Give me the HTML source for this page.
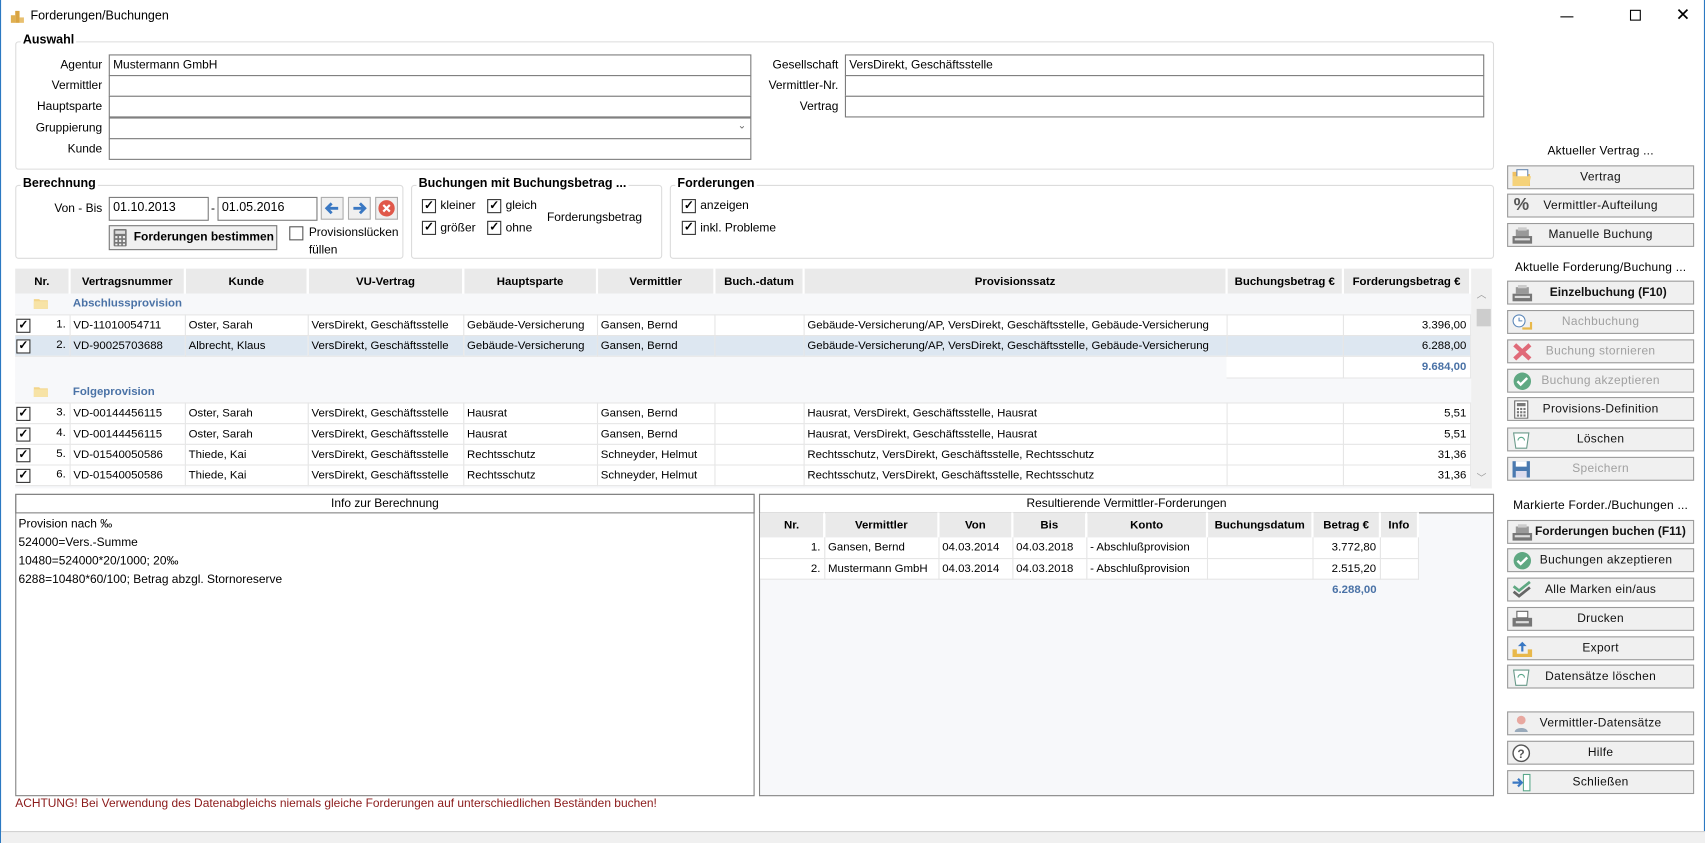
<!DOCTYPE html>
<html><head><meta charset="utf-8">
<style>
*{box-sizing:border-box;margin:0;padding:0}
html,body{width:1705px;height:843px;overflow:hidden;background:#fff}
#w{position:absolute;left:0;top:0;width:1568px;height:775px;transform:scale(1.08737,1.08774);transform-origin:0 0;font-family:"Liberation Sans",sans-serif;font-size:11px;color:#000;background:#fff;border-left:1px solid #2b79c2;border-right:1px solid #2b79c2}
.a{position:absolute;white-space:nowrap}
.grp{position:absolute;border:1px solid #dcdcdc;border-radius:3px}
.gl{position:absolute;background:#fff;font-weight:bold;font-size:11.5px;padding:0 2px}
.lbl{position:absolute;text-align:right;width:90px}
.inp{position:absolute;border:1px solid #7a7a7a;background:#fff;height:20px;padding:3px 3px;font-size:11px}
.cb{position:absolute;width:13px;height:13px;border:1px solid #333;background:#fff;font-size:11px;line-height:11px;text-align:center}
.cb.on::after{content:"✓";font-weight:bold;font-size:11px}
.cbx{display:inline-block;float:left;width:13px;height:13px;border:1px solid #333;background:#fff;font-size:11px;line-height:11px;text-align:center;margin-left:-2px;margin-top:1px}
.cbx::after{content:"✓";font-weight:bold}
table{border-collapse:collapse;table-layout:fixed;position:absolute}
td,th{height:19px;padding:0 3px;white-space:nowrap;overflow:hidden;font-size:10.5px;border-right:1px solid #e6e6e6;border-bottom:1px solid #e6e6e6}
th{background:#eaeaea;font-weight:bold;height:23px;border-right:2px solid #fff;border-bottom:none}
.r{text-align:right}
.gr td{background:#f7f8fa;border-right:none;color:#4a72a6;font-weight:bold}
.btn{position:absolute;left:1385px;width:172px;height:22px;border:1px solid #9a9a9a;background:#f0f0f0;text-align:center;line-height:20px;font-size:11px;font-weight:normal;color:#111;letter-spacing:.3px}
.btn.dis{color:#a0a0a0}
.btn b{font-weight:bold;letter-spacing:0;padding-left:14px}
.btn svg{position:absolute;left:3px;top:2px}
.sec{position:absolute;left:1385px;width:172px;text-align:center;font-size:11px;letter-spacing:.2px}
.sb{position:absolute;border:1px solid #adadad;background:#f0f0f0;width:21px;height:21px}
</style></head><body><div id="w">
<svg class="a" style="left:8px;top:8px" width="14" height="14"><rect x="1" y="6" width="4" height="7" fill="#e0b050"/><rect x="5" y="2" width="4" height="11" fill="#d9a441"/><rect x="9" y="8" width="4" height="5" fill="#e8c070"/></svg>
<div class="a" style="left:27px;top:9px;font-size:11.5px">Forderungen/Buchungen</div>
<div class="a" style="left:1434px;top:15px;width:12px;height:1px;background:#000"></div>
<div class="a" style="left:1498px;top:9px;width:10px;height:10px;border:1px solid #000"></div>
<div class="a" style="left:1540px;top:4px;font-size:16px">✕</div>

<div class="grp" style="left:13px;top:38px;width:1360px;height:118px"></div>
<div class="gl" style="left:18px;top:31px">Auswahl</div>
<div class="lbl" style="left:3px;top:54px">Agentur</div>
<div class="lbl" style="left:3px;top:73px">Vermittler</div>
<div class="lbl" style="left:3px;top:92px">Hauptsparte</div>
<div class="lbl" style="left:3px;top:112px">Gruppierung</div>
<div class="lbl" style="left:3px;top:131px">Kunde</div>
<div class="inp" style="left:99px;top:50px;width:591px">Mustermann GmbH</div>
<div class="inp" style="left:99px;top:69px;width:591px"></div>
<div class="inp" style="left:99px;top:88px;width:591px"></div>
<div class="inp" style="left:99px;top:108px;width:591px"><span style="position:absolute;right:4px;top:1px;font-size:9px;color:#666">⌄</span></div>
<div class="inp" style="left:99px;top:127px;width:591px"></div>
<div class="lbl" style="left:680px;top:54px">Gesellschaft</div>
<div class="lbl" style="left:680px;top:73px">Vermittler-Nr.</div>
<div class="lbl" style="left:680px;top:92px">Vertrag</div>
<div class="inp" style="left:776px;top:50px;width:588px">VersDirekt, Geschäftsstelle</div>
<div class="inp" style="left:776px;top:69px;width:588px"></div>
<div class="inp" style="left:776px;top:88px;width:588px"></div>

<div class="grp" style="left:13px;top:170px;width:357px;height:68px"></div>
<div class="gl" style="left:18px;top:163px">Berechnung</div>
<div class="lbl" style="left:3px;top:186px">Von - Bis</div>
<div class="inp" style="left:99px;top:181px;width:92px;height:22px;font-size:11.5px">01.10.2013</div>
<div class="a" style="left:193px;top:186px">-</div>
<div class="inp" style="left:199px;top:181px;width:92px;height:22px;font-size:11.5px">01.05.2016</div>
<div class="sb" style="left:294px;top:181px"><svg width="19" height="19"><path d="M15 9.5H5M9 5L4.5 9.5L9 14" stroke="#3a78c3" stroke-width="2.6" fill="none"/></svg></div>
<div class="sb" style="left:319px;top:181px"><svg width="19" height="19"><path d="M4 9.5H14M10 5L14.5 9.5L10 14" stroke="#3a78c3" stroke-width="2.6" fill="none"/></svg></div>
<div class="sb" style="left:344px;top:181px"><svg width="19" height="19"><circle cx="9.5" cy="9.5" r="7.5" fill="#e0584a"/><path d="M6.5 6.5L12.5 12.5M12.5 6.5L6.5 12.5" stroke="#fff" stroke-width="2"/></svg></div>
<div class="a" style="left:99px;top:207px;width:155px;height:23px;border:1px solid #777;background:#f0f0f0;font-weight:bold;font-size:11px;line-height:21px;padding-left:22px">
<svg style="position:absolute;left:3px;top:2px" width="13" height="17"><rect x="0.5" y="0.5" width="12" height="16" fill="#777" rx="1"/><rect x="2" y="2" width="9" height="3" fill="#ddd"/><g fill="#eee"><rect x="2" y="7" width="2" height="2"/><rect x="5.5" y="7" width="2" height="2"/><rect x="9" y="7" width="2" height="2"/><rect x="2" y="10.5" width="2" height="2"/><rect x="5.5" y="10.5" width="2" height="2"/><rect x="9" y="10.5" width="2" height="2"/><rect x="2" y="14" width="2" height="1.5"/><rect x="5.5" y="14" width="2" height="1.5"/><rect x="9" y="14" width="2" height="1.5"/></g></svg>Forderungen bestimmen</div>
<div class="cb" style="left:265px;top:208px;border-color:#555"></div>
<div class="a" style="left:283px;top:208px">Provisionslücken</div>
<div class="a" style="left:283px;top:224px">füllen</div>

<div class="grp" style="left:377px;top:170px;width:231px;height:68px"></div>
<div class="gl" style="left:382px;top:163px">Buchungen mit Buchungsbetrag ...</div>
<div class="cb on" style="left:387px;top:183px"></div><div class="a" style="left:404px;top:183px">kleiner</div>
<div class="cb on" style="left:447px;top:183px"></div><div class="a" style="left:464px;top:183px">gleich</div>
<div class="cb on" style="left:387px;top:203px"></div><div class="a" style="left:404px;top:204px">größer</div>
<div class="cb on" style="left:447px;top:203px"></div><div class="a" style="left:464px;top:204px">ohne</div>
<div class="a" style="left:502px;top:194px">Forderungsbetrag</div>

<div class="grp" style="left:615px;top:170px;width:758px;height:68px"></div>
<div class="gl" style="left:620px;top:163px">Forderungen</div>
<div class="cb on" style="left:626px;top:183px"></div><div class="a" style="left:643px;top:183px">anzeigen</div>
<div class="cb on" style="left:626px;top:203px"></div><div class="a" style="left:643px;top:204px">inkl. Probleme</div>

<div class="a" style="left:13px;top:247px;width:1358px;height:202px;background:#f7f8fa"></div>
<table style="left:13px;top:247px;width:1338px">
<colgroup><col style="width:50px"><col style="width:106px"><col style="width:113px"><col style="width:143px"><col style="width:123px"><col style="width:108px"><col style="width:82px"><col style="width:389px"><col style="width:107px"><col style="width:117px"></colgroup>
<tr><th>Nr.</th><th>Vertragsnummer</th><th>Kunde</th><th>VU-Vertrag</th><th>Hauptsparte</th><th>Vermittler</th><th>Buch.-datum</th><th>Provisionssatz</th><th>Buchungsbetrag €</th><th>Forderungsbetrag €</th></tr>
<tr class="gr"><td><svg width="14" height="12" style="margin-left:14px;vertical-align:middle"><path d="M0 2h5l1 1h7v8H0z" fill="#f3d58a"/><path d="M0 4h13v7H0z" fill="#f7e3a6"/></svg></td><td colspan="9">Abschlussprovision</td></tr>
<tr style="background:#fff"><td class="r"><span class="cbx"></span>1.</td><td>VD-11010054711</td><td>Oster, Sarah</td><td>VersDirekt, Geschäftsstelle</td><td>Gebäude-Versicherung</td><td>Gansen, Bernd</td><td></td><td>Gebäude-Versicherung/AP, VersDirekt, Geschäftsstelle, Gebäude-Versicherung</td><td></td><td class="r">3.396,00</td></tr>
<tr style="background:#dde7f1"><td class="r"><span class="cbx"></span>2.</td><td>VD-90025703688</td><td>Albrecht, Klaus</td><td>VersDirekt, Geschäftsstelle</td><td>Gebäude-Versicherung</td><td>Gansen, Bernd</td><td></td><td>Gebäude-Versicherung/AP, VersDirekt, Geschäftsstelle, Gebäude-Versicherung</td><td></td><td class="r">6.288,00</td></tr>
<tr style="background:#f7f8fa"><td colspan="8" style="height:20px;border-right:none;border-bottom:none"></td><td style="background:#fff;height:20px"></td><td class="r" style="background:#fff;color:#4a72a6;font-weight:bold;height:20px">9.684,00</td></tr>
<tr style="background:#f7f8fa"><td colspan="10" style="height:4px;border:none"></td></tr>
<tr class="gr"><td><svg width="14" height="12" style="margin-left:14px;vertical-align:middle"><path d="M0 2h5l1 1h7v8H0z" fill="#f3d58a"/><path d="M0 4h13v7H0z" fill="#f7e3a6"/></svg></td><td colspan="9">Folgeprovision</td></tr>
<tr style="background:#fff"><td class="r"><span class="cbx"></span>3.</td><td>VD-00144456115</td><td>Oster, Sarah</td><td>VersDirekt, Geschäftsstelle</td><td>Hausrat</td><td>Gansen, Bernd</td><td></td><td>Hausrat, VersDirekt, Geschäftsstelle, Hausrat</td><td></td><td class="r">5,51</td></tr>
<tr style="background:#fff"><td class="r"><span class="cbx"></span>4.</td><td>VD-00144456115</td><td>Oster, Sarah</td><td>VersDirekt, Geschäftsstelle</td><td>Hausrat</td><td>Gansen, Bernd</td><td></td><td>Hausrat, VersDirekt, Geschäftsstelle, Hausrat</td><td></td><td class="r">5,51</td></tr>
<tr style="background:#fff"><td class="r"><span class="cbx"></span>5.</td><td>VD-01540050586</td><td>Thiede, Kai</td><td>VersDirekt, Geschäftsstelle</td><td>Rechtsschutz</td><td>Schneyder, Helmut</td><td></td><td>Rechtsschutz, VersDirekt, Geschäftsstelle, Rechtsschutz</td><td></td><td class="r">31,36</td></tr>
<tr style="background:#fff"><td class="r"><span class="cbx"></span>6.</td><td>VD-01540050586</td><td>Thiede, Kai</td><td>VersDirekt, Geschäftsstelle</td><td>Rechtsschutz</td><td>Schneyder, Helmut</td><td></td><td>Rechtsschutz, VersDirekt, Geschäftsstelle, Rechtsschutz</td><td></td><td class="r">31,36</td></tr>
</table>
<div class="a" style="left:1352px;top:247px;width:19px;height:202px;background:#f0f0f0"></div>
<div class="a" style="left:1357px;top:264px;font-size:9px;color:#999">︿</div>
<div class="a" style="left:1357px;top:284px;width:13px;height:16px;background:#cdcdcd"></div>
<div class="a" style="left:1357px;top:432px;font-size:9px;color:#999">﹀</div>

<div class="a" style="left:13px;top:454px;width:680px;height:278px;border:1px solid #828282"></div>
<div class="a" style="left:13px;top:454px;width:680px;height:18px;border:1px solid #828282;text-align:center;line-height:16px">Info zur Berechnung</div>
<div class="a" style="left:16px;top:474px;line-height:17px;font-size:11px">Provision nach ‰<br>524000=Vers.-Summe<br>10480=524000*20/1000; 20‰<br>6288=10480*60/100; Betrag abzgl. Stornoreserve</div>

<div class="a" style="left:697px;top:454px;width:676px;height:278px;border:1px solid #828282;background:#f7f8fa"></div>
<div class="a" style="left:697px;top:454px;width:676px;height:18px;border:1px solid #828282;text-align:center;line-height:16px;background:#fff">Resultierende Vermittler-Forderungen</div>
<table style="left:698px;top:471px;width:605px">
<colgroup><col style="width:59px"><col style="width:105px"><col style="width:68px"><col style="width:68px"><col style="width:111px"><col style="width:97px"><col style="width:62px"><col style="width:35px"></colgroup>
<tr><th style="height:20px">Nr.</th><th>Vermittler</th><th>Von</th><th>Bis</th><th>Konto</th><th>Buchungsdatum</th><th>Betrag €</th><th>Info</th></tr>
<tr style="background:#fff"><td class="r">1.</td><td>Gansen, Bernd</td><td>04.03.2014</td><td>04.03.2018</td><td>- Abschlußprovision</td><td></td><td class="r">3.772,80</td><td></td></tr>
<tr style="background:#fff"><td class="r">2.</td><td>Mustermann GmbH</td><td>04.03.2014</td><td>04.03.2018</td><td>- Abschlußprovision</td><td></td><td class="r">2.515,20</td><td></td></tr>
<tr><td colspan="6" style="border:none;height:20px"></td><td class="r" style="color:#4a72a6;font-weight:bold;border:none">6.288,00</td><td style="border:none"></td></tr>
</table>

<div class="a" style="left:13px;top:733px;color:#8b1a1a">ACHTUNG! Bei Verwendung des Datenabgleichs niemals gleiche Forderungen auf unterschiedlichen Beständen buchen!</div>
<div class="a" style="left:0;top:764px;width:1568px;height:11px;background:#f0f0f0;border-top:1px solid #d0d0d0"></div>

<div class="sec" style="top:133px">Aktueller Vertrag ...</div>
<div class="btn" style="top:152px"><svg width="20" height="17"><path d="M1 3h6l2 2h8v11H1z" fill="#f0c060"/><rect x="5" y="1" width="10" height="9" fill="#fff" stroke="#6a8ab0"/><path d="M1 7h17l-2 9H1z" fill="#f5d27a"/></svg>Vertrag</div>
<div class="btn" style="top:178px"><span style="position:absolute;left:5px;top:0;font-size:16px;font-weight:bold;color:#555">%</span>Vermittler-Aufteilung</div>
<div class="btn" style="top:205px"><svg width="20" height="17"><rect x="1" y="9" width="18" height="7" fill="#777"/><rect x="4" y="3" width="12" height="6" fill="#999"/><rect x="6" y="1" width="8" height="3" fill="#ccc"/><rect x="3" y="11" width="14" height="2" fill="#ddd"/></svg>Manuelle Buchung</div>
<div class="sec" style="top:240px">Aktuelle Forderung/Buchung ...</div>
<div class="btn" style="top:258px"><svg width="20" height="17"><rect x="1" y="9" width="18" height="7" fill="#777"/><rect x="4" y="3" width="12" height="6" fill="#999"/><rect x="6" y="1" width="8" height="3" fill="#ccc"/><rect x="3" y="11" width="14" height="2" fill="#ddd"/></svg><b>Einzelbuchung (F10)</b></div>
<div class="btn dis" style="top:285px"><svg width="20" height="17"><circle cx="7" cy="7" r="5.5" fill="#fff" stroke="#5a86b8"/><path d="M7 4v3h3" stroke="#5a86b8" fill="none"/><path d="M10 14h8V8" stroke="#e8b84a" stroke-width="2" fill="none"/></svg>Nachbuchung</div>
<div class="btn dis" style="top:312px"><svg width="20" height="17"><path d="M3 2L17 15M17 2L3 15" stroke="#e06a78" stroke-width="4"/></svg>Buchung stornieren</div>
<div class="btn dis" style="top:339px"><svg width="20" height="17"><circle cx="10" cy="8.5" r="8" fill="#5fa882"/><path d="M5.5 8.5l3 3 6-6" stroke="#fff" stroke-width="2.2" fill="none"/></svg>Buchung akzeptieren</div>
<div class="btn" style="top:365px"><svg width="20" height="17"><rect x="3" y="0.5" width="12" height="16" fill="#fff" stroke="#666"/><rect x="5" y="2.5" width="8" height="3" fill="#777"/><g fill="#777"><rect x="5" y="7" width="2" height="2"/><rect x="8" y="7" width="2" height="2"/><rect x="11" y="7" width="2" height="2"/><rect x="5" y="10" width="2" height="2"/><rect x="8" y="10" width="2" height="2"/><rect x="11" y="10" width="2" height="2"/><rect x="5" y="13" width="2" height="2"/><rect x="8" y="13" width="2" height="2"/><rect x="11" y="13" width="2" height="2"/></g></svg>Provisions-Definition</div>
<div class="btn" style="top:393px"><svg width="20" height="17"><path d="M2 2h14l-2 14H4z" fill="#fff" stroke="#6a9a8a"/><path d="M6 9a3 3 0 0 1 6 0" stroke="#5aa88a" fill="none"/></svg>Löschen</div>
<div class="btn dis" style="top:420px"><svg width="20" height="17"><rect x="1" y="1" width="16" height="15" fill="#4a7ab0"/><rect x="4" y="1" width="10" height="5" fill="#fff"/><rect x="4" y="10" width="10" height="6" fill="#dde"/></svg>Speichern</div>
<div class="sec" style="top:459px">Markierte Forder./Buchungen ...</div>
<div class="btn" style="top:478px"><svg width="20" height="17"><rect x="1" y="9" width="18" height="7" fill="#777"/><rect x="4" y="3" width="12" height="6" fill="#999"/><rect x="6" y="1" width="8" height="3" fill="#ccc"/><rect x="3" y="11" width="14" height="2" fill="#ddd"/></svg><b style="padding-left:18px">Forderungen buchen (F11)</b></div>
<div class="btn" style="top:504px"><svg width="20" height="17"><circle cx="10" cy="8.5" r="8" fill="#5fa882"/><path d="M5.5 8.5l3 3 6-6" stroke="#fff" stroke-width="2.2" fill="none"/></svg>&nbsp;&nbsp;&nbsp;Buchungen akzeptieren</div>
<div class="btn" style="top:531px"><svg width="20" height="17"><path d="M2 5l5 4 10-8" stroke="#5fa882" stroke-width="2.5" fill="none"/><path d="M2 10l5 4 10-8" stroke="#666" stroke-width="2.5" fill="none"/></svg>Alle Marken ein/aus</div>
<div class="btn" style="top:558px"><svg width="20" height="17"><rect x="5" y="1" width="10" height="6" fill="#fff" stroke="#666"/><rect x="1" y="7" width="18" height="8" fill="#777"/><rect x="4" y="10" width="12" height="2" fill="#ddd"/></svg>Drucken</div>
<div class="btn" style="top:585px"><svg width="20" height="17"><path d="M1 9h4v4h10V9h4v7H1z" fill="#e8b84a"/><path d="M10 2L6 6h3v5h2V6h3z" fill="#3a78c3"/></svg>Export</div>
<div class="btn" style="top:611px"><svg width="20" height="17"><path d="M2 2h14l-2 14H4z" fill="#fff" stroke="#6a9a8a"/><path d="M6 9a3 3 0 0 1 6 0" stroke="#5aa88a" fill="none"/></svg>Datensätze löschen</div>
<div class="btn" style="top:654px"><svg width="20" height="17"><circle cx="9" cy="5" r="4" fill="#e8a8a0"/><path d="M3 16c0-5 12-5 12 0z" fill="#9ab"/></svg>Vermittler-Datensätze</div>
<div class="btn" style="top:681px"><svg width="20" height="17"><circle cx="9" cy="8.5" r="7.5" fill="#fff" stroke="#555" stroke-width="1.3"/><text x="5.5" y="13" font-size="11" font-weight="bold" fill="#555" font-family="Liberation Sans">?</text></svg>Hilfe</div>
<div class="btn" style="top:708px"><svg width="20" height="17"><rect x="11" y="1" width="6" height="15" fill="#fff" stroke="#5aa88a"/><path d="M1 8.5h8M6 5l3.5 3.5L6 12" stroke="#3a78c3" stroke-width="2" fill="none"/></svg>Schließen</div>
</div></body></html>
